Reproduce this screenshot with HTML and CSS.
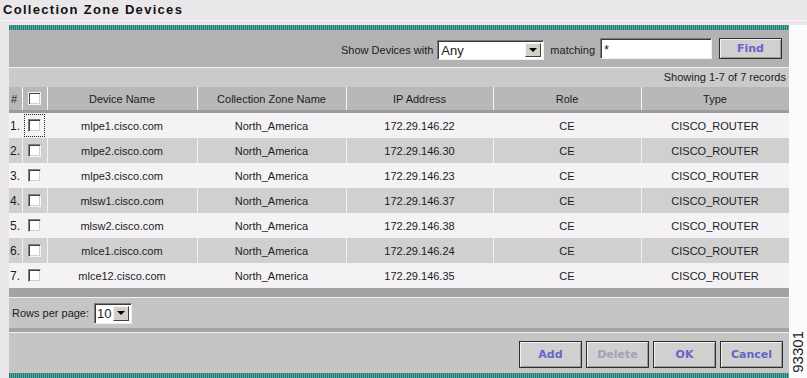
FILE: index.html
```html
<!DOCTYPE html>
<html>
<head>
<meta charset="utf-8">
<link rel="stylesheet" href="styles.css">
</head>
<body>
<div class="title">Collection Zone Devices</div>
<div class="main">
  <div class="panel">
    <div class="stripe"></div>
    <div class="filter">
      <span class="lbl">Show Devices with</span>
      <div class="combo any"><span class="combo-val">Any</span><span class="combo-btn"><i class="tri"></i></span></div>
      <span class="lbl match">matching</span>
      <div class="field">*</div>
      <div class="btn find">Find</div>
    </div>
    <div class="status">Showing 1-7 of 7 records</div>
    <div class="grid head">
      <div class="c num hnum">#</div>
      <div class="c cbc"><span class="cb hcb"></span></div>
      <div class="c">Device Name</div>
      <div class="c">Collection Zone Name</div>
      <div class="c">IP Address</div>
      <div class="c">Role</div>
      <div class="c">Type</div>
    </div>
    <div class="grid row light">
      <div class="c num">1.</div><div class="c cbc"><span class="focus"><span class="cb"></span></span></div>
      <div class="c">mlpe1.cisco.com</div><div class="c">North_America</div><div class="c">172.29.146.22</div><div class="c">CE</div><div class="c">CISCO_ROUTER</div>
    </div>
    <div class="grid row dark">
      <div class="c num">2.</div><div class="c cbc"><span class="cb"></span></div>
      <div class="c">mlpe2.cisco.com</div><div class="c">North_America</div><div class="c">172.29.146.30</div><div class="c">CE</div><div class="c">CISCO_ROUTER</div>
    </div>
    <div class="grid row light">
      <div class="c num">3.</div><div class="c cbc"><span class="cb"></span></div>
      <div class="c">mlpe3.cisco.com</div><div class="c">North_America</div><div class="c">172.29.146.23</div><div class="c">CE</div><div class="c">CISCO_ROUTER</div>
    </div>
    <div class="grid row dark">
      <div class="c num">4.</div><div class="c cbc"><span class="cb"></span></div>
      <div class="c">mlsw1.cisco.com</div><div class="c">North_America</div><div class="c">172.29.146.37</div><div class="c">CE</div><div class="c">CISCO_ROUTER</div>
    </div>
    <div class="grid row light">
      <div class="c num">5.</div><div class="c cbc"><span class="cb"></span></div>
      <div class="c">mlsw2.cisco.com</div><div class="c">North_America</div><div class="c">172.29.146.38</div><div class="c">CE</div><div class="c">CISCO_ROUTER</div>
    </div>
    <div class="grid row dark">
      <div class="c num">6.</div><div class="c cbc"><span class="cb"></span></div>
      <div class="c">mlce1.cisco.com</div><div class="c">North_America</div><div class="c">172.29.146.24</div><div class="c">CE</div><div class="c">CISCO_ROUTER</div>
    </div>
    <div class="grid row light">
      <div class="c num">7.</div><div class="c cbc"><span class="cb"></span></div>
      <div class="c">mlce12.cisco.com</div><div class="c">North_America</div><div class="c">172.29.146.35</div><div class="c">CE</div><div class="c">CISCO_ROUTER</div>
    </div>
    <div class="sep1"></div>
    <div class="paging">
      <span class="lbl">Rows per page:</span>
      <div class="combo rpp"><span class="combo-val">10</span><span class="combo-btn"><i class="tri"></i></span></div>
    </div>
    <div class="sep2"></div>
    <div class="actions">
      <div class="btn">Add</div>
      <div class="btn disabled">Delete</div>
      <div class="btn">OK</div>
      <div class="btn">Cancel</div>
    </div>
    <div class="stripe"></div>
  </div>
  <div class="side"><span class="figno">93301</span></div>
</div>
</body>
</html>
```

FILE: styles.css
```css
html, body {
  margin: 0;
  padding: 0;
}
body {
  width: 807px;
  height: 378px;
  overflow: hidden;
  background: #e9e7e9;
  font-family: "Liberation Sans", Arial, sans-serif;
  font-size: 11px;
  color: #1c1c1c;
}
.title {
  height: 20px;
  line-height: 19px;
  padding-left: 3px;
  font-weight: bold;
  font-size: 13px;
  letter-spacing: 1.3px;
  color: #111;
  border-bottom: 1px solid #f6f4f6;
}
.main {
  display: flex;
  margin-top: 4px;
}
.panel {
  margin-left: 9px;
  width: 780px;
  display: flex;
  flex-direction: column;
}
.side {
  flex: 1;
  background: #fbfbfb;
  position: relative;
}
.figno {
  position: absolute;
  left: 2px;
  bottom: 5px;
  writing-mode: vertical-rl;
  transform: rotate(180deg);
  font-family: "Liberation Sans", Arial, sans-serif;
  font-size: 15px;
  line-height: 13px;
  color: #222;
}
.stripe {
  height: 5px;
  background: repeating-linear-gradient(90deg, #1d7a72 0 1px, #62a9a2 1px 2px);
  flex: none;
}
.filter {
  height: 37px;
  background: #b2b2b2;
  border-bottom: 1px solid #f2f2f2;
  display: flex;
  align-items: center;
  justify-content: flex-end;
  padding-right: 7px;
}
.lbl {
  white-space: nowrap;
}
.filter .lbl {
  margin-top: 3px;
}
.combo {
  display: flex;
  background: #fff;
  border-top: 1px solid #7a7a7a;
  border-left: 1px solid #7a7a7a;
  border-right: 1px solid #f0f0f0;
  border-bottom: 1px solid #f0f0f0;
  box-shadow: inset 1px 1px 0 #3a3a3a;
  box-sizing: border-box;
}
.combo-val {
  flex: 1;
  font-size: 13px;
  padding-left: 3px;
  line-height: 17px;
  padding-top: 1px;
}
.combo-btn {
  width: 16px;
  margin: 2px 2px 2px 0;
  background: #d4d0c8;
  border-top: 1px solid #f4f4f4;
  border-left: 1px solid #f4f4f4;
  border-right: 1px solid #404040;
  border-bottom: 1px solid #404040;
  box-sizing: border-box;
  display: flex;
  align-items: center;
  justify-content: center;
}
.tri {
  width: 0;
  height: 0;
  border-left: 4px solid transparent;
  border-right: 4px solid transparent;
  border-top: 4px solid #000;
}
.any {
  width: 107px;
  height: 20px;
  margin-left: 4px;
  margin-top: 3px;
}
.match {
  margin-left: 6px;
  margin-right: 5px;
}
.field {
  width: 112px;
  height: 21px;
  box-sizing: border-box;
  background: #fff;
  border-top: 1px solid #7a7a7a;
  border-left: 1px solid #7a7a7a;
  border-right: 1px solid #f0f0f0;
  border-bottom: 1px solid #f0f0f0;
  box-shadow: inset 1px 1px 0 #3a3a3a;
  font-size: 13px;
  line-height: 17px;
  padding-left: 3px;
  padding-top: 2px;
}
.btn {
  width: 63px;
  box-sizing: border-box;
  background: #d0d0d0;
  border: 1px solid #2e2e2e;
  box-shadow: inset 1px 1px 0 #f0f0f0, inset -1px -1px 0 #9a9a9a;
  color: #6565c8;
  font-weight: bold;
  font-size: 11px;
  display: flex;
  align-items: center;
  justify-content: center;
  font-family: "DejaVu Sans", "Liberation Sans", sans-serif;
}
.btn.disabled {
  color: #a2a2b6;
}
.find {
  height: 21px;
  margin-left: 7px;
}
.status {
  height: 19px;
  background: #cacaca;
  text-align: right;
  line-height: 19px;
  padding-right: 3px;
}
.grid {
  display: grid;
  grid-template-columns: 13px 25px 150px 149px 147px 148px 148px;
}
.c {
  display: flex;
  align-items: center;
  justify-content: center;
  box-shadow: inset 1px 0 0 #f2f2f2;
  white-space: nowrap;
}
.c.num {
  justify-content: flex-start;
  padding-left: 1px;
  box-shadow: none;
  font-size: 12px;
}
.head {
  height: 23px;
  background: #b8b8b8;
  border-bottom: 3px solid #9c9c9c;
}
.head .c {
  box-shadow: inset 1px 0 0 #f6f6f6;
}
.head .c.num {
  box-shadow: none;
  padding-left: 2px;
  font-size: 11px;
}
.row {
  height: 25px;
}
.row.light {
  background: #f4f2f4;
}
.row.dark {
  background: #d0d0d0;
}
.cb {
  display: block;
  width: 13px;
  height: 13px;
  box-sizing: border-box;
  background: #fff;
  border-top: 1px solid #808080;
  border-left: 1px solid #808080;
  border-right: 1px solid #f4f4f4;
  border-bottom: 1px solid #f4f4f4;
  box-shadow: inset 1px 1px 0 #404040, inset -1px -1px 0 #d4d0c8;
}
.hcb {
  border-color: #f6f6f6;
  box-shadow: inset 1px 1px 0 #404040, inset -1px -1px 0 #d4d0c8;
}
.focus {
  display: flex;
  align-items: center;
  justify-content: center;
  width: 21px;
  height: 23px;
  box-sizing: border-box;
  border: 1px dotted #222;
}
.sep1 {
  height: 9px;
  background: #a3a3a3;
  border-bottom: 1px solid #f2f2f2;
}
.paging {
  height: 30px;
  background: #c5c5c5;
  display: flex;
  align-items: center;
  padding-left: 3px;
}
.rpp {
  width: 38px;
  height: 21px;
  margin-left: 5px;
}
.rpp .combo-val {
  font-size: 13px;
  padding-left: 2px;
}
.sep2 {
  height: 4px;
  background: #a3a3a3;
  border-bottom: 1px solid #f2f2f2;
}
.actions {
  height: 40px;
  background: #c5c5c5;
  display: flex;
  align-items: center;
  justify-content: flex-end;
  gap: 4px;
  padding-right: 6px;
}
.actions .btn {
  height: 27px;
  margin-top: 2px;
}
```
